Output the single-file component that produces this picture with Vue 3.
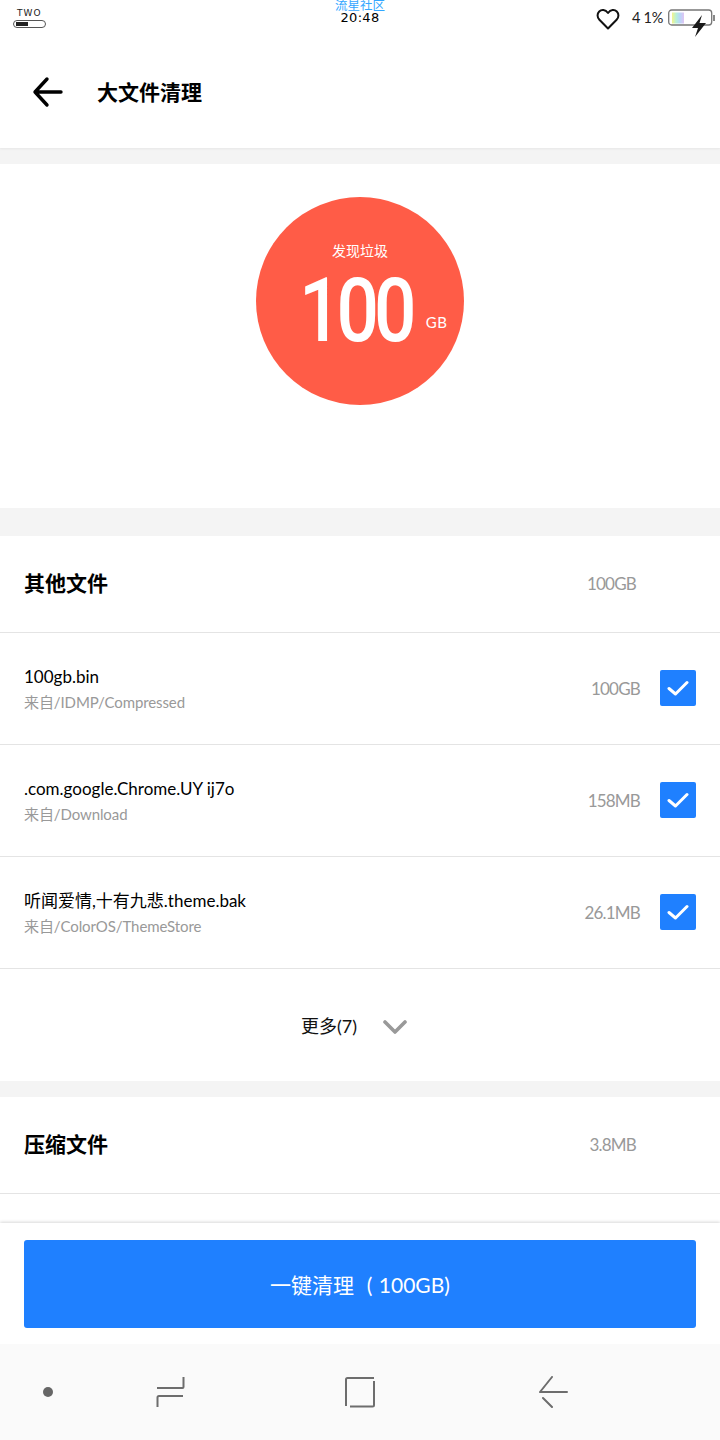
<template>
  <div class="page">
    <div class="scroll">
      <header class="top">
        <div class="status">
          <div class="sim">
            <span class="sim__name">TWO</span>
            <span class="sim__bar"><i></i></span>
          </div>
          <div class="clock">
            <span class="clock__tag">流星社区</span>
            <span class="clock__time">20:48</span>
          </div>
          <div class="status__right">
            <svg class="heart" width="24" height="22" viewBox="0 0 24 22">
              <path d="M12 20.500 3.400 11.800C1 9.300 1 5.700 3.200 3.500 5.500 1.300 9.300 1.500 12 5c2.700-3.500 6.500-3.700 8.800-1.500 2.200 2.200 2.200 5.800-.2 8.300L12 20.500Z" fill="none" stroke="#111" stroke-width="2" stroke-linejoin="round" />
            </svg>
            <span class="percent">4 1%</span>
            <svg class="battery" width="48" height="28" viewBox="0 0 48 28">
              <defs>
                <linearGradient id="rainbow" x1="0" x2="1" y1="0" y2="0">
                  <stop offset="0" stop-color="#f4f48c" />
                  <stop offset="0.35" stop-color="#b8f0d8" />
                  <stop offset="0.65" stop-color="#b8d8f8" />
                  <stop offset="1" stop-color="#e0c4f4" />
                </linearGradient>
              </defs>
              <rect x="0.700" y="1" width="43" height="15" rx="3" fill="#fff" stroke="#777" stroke-width="1.300" />
              <rect x="45" y="6" width="2" height="6" fill="#888" />
              <rect x="4" y="3.500" width="12" height="11" fill="url(#rainbow)" />
              <path d="M34 6 24 19h6l-3 9 11-14h-6.500L34 6Z" fill="#1a1a1a" />
            </svg>
          </div>
        </div>
        <div class="nav">
          <svg class="nav__back" width="32" height="32" viewBox="0 0 32 32">
            <path d="M3 16h26M15 3 3 16l12 13" fill="none" stroke="#000" stroke-width="3.400" stroke-linecap="round" stroke-linejoin="round" />
          </svg>
          <h1 class="nav__title">大文件清理</h1>
        </div>
      </header>

      <section class="hero">
        <div class="circle">
          <span class="circle__label">发现垃圾</span>
          <div class="circle__value">
            <b>100</b>
            <span>GB</span>
          </div>
        </div>
      </section>

      <section class="group group--first">
        <div class="group__head">
          <h2>其他文件</h2>
          <span class="size">100GB</span>
        </div>
        <div v-for="file in files" :key="file.name" class="row">
          <div class="row__text">
            <div class="row__name">{{ file.name }}</div>
            <div class="row__path">{{ file.path }}</div>
          </div>
          <span class="size size--row">{{ file.size }}</span>
          <span class="check">
            <svg width="22" height="16" viewBox="0 0 22 16">
              <path d="M2 8.500 8.500 14 20 2.500" fill="none" stroke="#fff" stroke-width="3" stroke-linecap="round" stroke-linejoin="round" />
            </svg>
          </span>
        </div>
        <div class="more">
          <span>更多(7)</span>
          <svg width="24" height="14" viewBox="0 0 24 14">
            <path d="M2 2l10 10L22 2" fill="none" stroke="#999" stroke-width="3.600" stroke-linecap="round" stroke-linejoin="round" />
          </svg>
        </div>
      </section>

      <section class="group group--second">
        <div class="group__head">
          <h2>压缩文件</h2>
          <span class="size">3.8MB</span>
        </div>
        <div class="row"></div>
      </section>
    </div>

    <footer class="footer">
      <button class="clean">一键清理 &nbsp;( 100GB)</button>
    </footer>

    <nav class="softkeys">
      <span class="softkeys__dot"></span>
      <svg class="softkeys__recent" width="30" height="32" viewBox="0 0 30 32">
        <path d="M1 12h25.500a1 1 0 0 0 1-1V1M27 20H3a1.500 1.500 0 0 0-1.500 1.500V31" fill="none" stroke="#6d6d6d" stroke-width="2" />
      </svg>
      <svg class="softkeys__home" width="32" height="32" viewBox="0 0 32 32">
        <path d="M30 2H3.500A1.500 1.500 0 0 0 2 3.500V30M6 30.500h22.500A1.500 1.500 0 0 0 30 29V5" fill="none" stroke="#6d6d6d" stroke-width="2" />
      </svg>
      <svg class="softkeys__back" width="32" height="32" viewBox="0 0 32 32">
        <path d="M14 1 2 16h27M5 22l9 9" fill="none" stroke="#6d6d6d" stroke-width="2" stroke-linecap="round" stroke-linejoin="round" />
      </svg>
    </nav>
  </div>
</template>

<script setup>
const files = [
  { name: "100gb.bin", path: "来自/IDMP/Compressed", size: "100GB" },
  { name: ".com.google.Chrome.UY ij7o", path: "来自/Download", size: "158MB" },
  { name: "听闻爱情,十有九悲.theme.bak", path: "来自/ColorOS/ThemeStore", size: "26.1MB" },
];
</script>

<style>
body {
  background: #fff;
}
</style>

<style scoped>
.page {
  width: 720px;
  height: 1440px;
  display: flex;
  flex-direction: column;
  overflow: hidden;
  font-family: "Lato", "Noto Sans CJK SC", sans-serif;
  color: #000;
}

.scroll {
  height: 1223px;
  overflow: hidden;
  background: #f4f4f4;
  flex-shrink: 0;
}

.top {
  height: 148px;
  background: #fff;
  box-shadow: 0 1px 2px #e6e6e6;
}
.status {
  height: 40px;
  position: relative;
  display: flex;
  justify-content: space-between;
}
.sim {
  margin: 8px 0 0 13px;
  display: flex;
  flex-direction: column;
  align-items: flex-start;
}
.sim__name {
  font: 9px/11px "DejaVu Sans", sans-serif;
  letter-spacing: 1px;
  margin-left: 4px;
  color: #222;
}
.sim__bar {
  width: 33px;
  height: 8px;
  margin-top: 1px;
  border: 1px solid #555;
  border-radius: 4px;
  box-sizing: border-box;
  padding: 1px 2px;
}
.sim__bar i {
  display: block;
  width: 12px;
  height: 4px;
  background: #222;
}
.clock {
  position: absolute;
  left: 0;
  right: 0;
  top: 0;
  text-align: center;
}
.clock__tag {
  display: block;
  font-size: 12.500px;
  line-height: 12px;
  color: #33a6ff;
}
.clock__time {
  display: block;
  font: 13px/12px "DejaVu Sans", sans-serif;
  letter-spacing: 0.300px;
  color: #000;
}
.status__right {
  display: flex;
  align-items: flex-start;
  padding: 8px 4px 0 0;
}
.heart {
  margin-right: 12px;
}
.percent {
  font-size: 14.500px;
  line-height: 20px;
  letter-spacing: -0.300px;
  color: #222;
  margin-right: 5px;
}
.battery {
  margin-top: 1px;
}

.nav {
  height: 104px;
  display: flex;
  align-items: center;
  padding-left: 32px;
}
.nav__back {
  margin-right: 33px;
}
.nav__title {
  margin: 0;
  font-size: 21px;
  line-height: 28px;
  font-weight: 700;
}

.hero {
  margin-top: 16px;
  height: 344px;
  background: #fff;
  padding-top: 33px;
  box-sizing: border-box;
}
.circle {
  width: 208px;
  height: 208px;
  margin: 0 auto;
  border-radius: 50%;
  background: #ff5c47;
  color: #fff;
  display: flex;
  flex-direction: column;
  align-items: center;
}
.circle__label {
  margin-top: 44px;
  font-size: 14px;
  line-height: 20px;
}
.circle__value {
  display: flex;
  align-items: flex-end;
  width: 172px;
  box-sizing: border-box;
  padding-left: 25px;
  margin-top: 9px;
}
.circle__value b {
  font-family: "Roboto", sans-serif;
  font-size: 89px;
  line-height: 82px;
  font-weight: 500;
  letter-spacing: -6px;
  transform: scaleX(0.84);
  transform-origin: left center;
}
.circle__value span {
  margin-left: -7px;
  font-size: 15px;
  line-height: 18px;
  letter-spacing: 0.500px;
  margin-bottom: 21px;
}

.group {
  margin-top: 16px;
  background: #fff;
}
.group--first {
  margin-top: 28px;
}
.group__head {
  height: 97px;
  box-sizing: border-box;
  padding: 0 84px 2px 24px;
  display: flex;
  align-items: center;
  justify-content: space-between;
  border-bottom: 1px solid #e4e4e4;
}
.group__head h2 {
  margin: 0;
  font-size: 21px;
  font-weight: 700;
  line-height: 28px;
}
.size {
  font-size: 17px;
  color: #999;
  letter-spacing: -0.800px;
}

.row {
  height: 112px;
  box-sizing: border-box;
  border-bottom: 1px solid #e4e4e4;
  padding: 0 24px;
  display: flex;
  align-items: center;
}
.row__text {
  flex: 1;
  min-width: 0;
}
.row__name {
  font-size: 17px;
  line-height: 24px;
  color: #000;
}
.row__path {
  font-size: 15px;
  line-height: 22px;
  letter-spacing: -0.100px;
  margin-top: 2px;
  color: #999;
}
.size--row {
  margin-right: 20px;
}
.check {
  width: 36px;
  height: 36px;
  margin-bottom: 1px;
  border-radius: 2px;
  background: #1f80ff;
  display: flex;
  align-items: center;
  justify-content: center;
}

.more {
  height: 112px;
  display: flex;
  align-items: center;
  justify-content: center;
  gap: 26px;
  font-size: 18px;
  color: #111;
  padding-right: 12px;
}
.more svg {
  margin-top: 4px;
}

.footer {
  height: 121px;
  flex-shrink: 0;
  box-sizing: border-box;
  background: #fff;
  padding: 17px 24px 0;
  box-shadow: 0 -1px 3px #d8d8d8;
  position: relative;
}
.clean {
  display: block;
  width: 100%;
  height: 88px;
  border: 0;
  border-radius: 3px;
  background: #1f80ff;
  color: #fff;
  font-family: inherit;
  font-size: 21px;
  word-spacing: 1px;
}

.softkeys {
  height: 96px;
  flex-shrink: 0;
  background: #fafafa;
  position: relative;
  display: flex;
  align-items: center;
  padding: 0 0 0 43px;
}
.softkeys__dot {
  width: 10px;
  height: 10px;
  border-radius: 50%;
  background: #666;
}
.softkeys__recent {
  margin-left: 103px;
}
.softkeys__home {
  margin-left: 158px;
}
.softkeys__back {
  margin-left: 162px;
}
</style>
